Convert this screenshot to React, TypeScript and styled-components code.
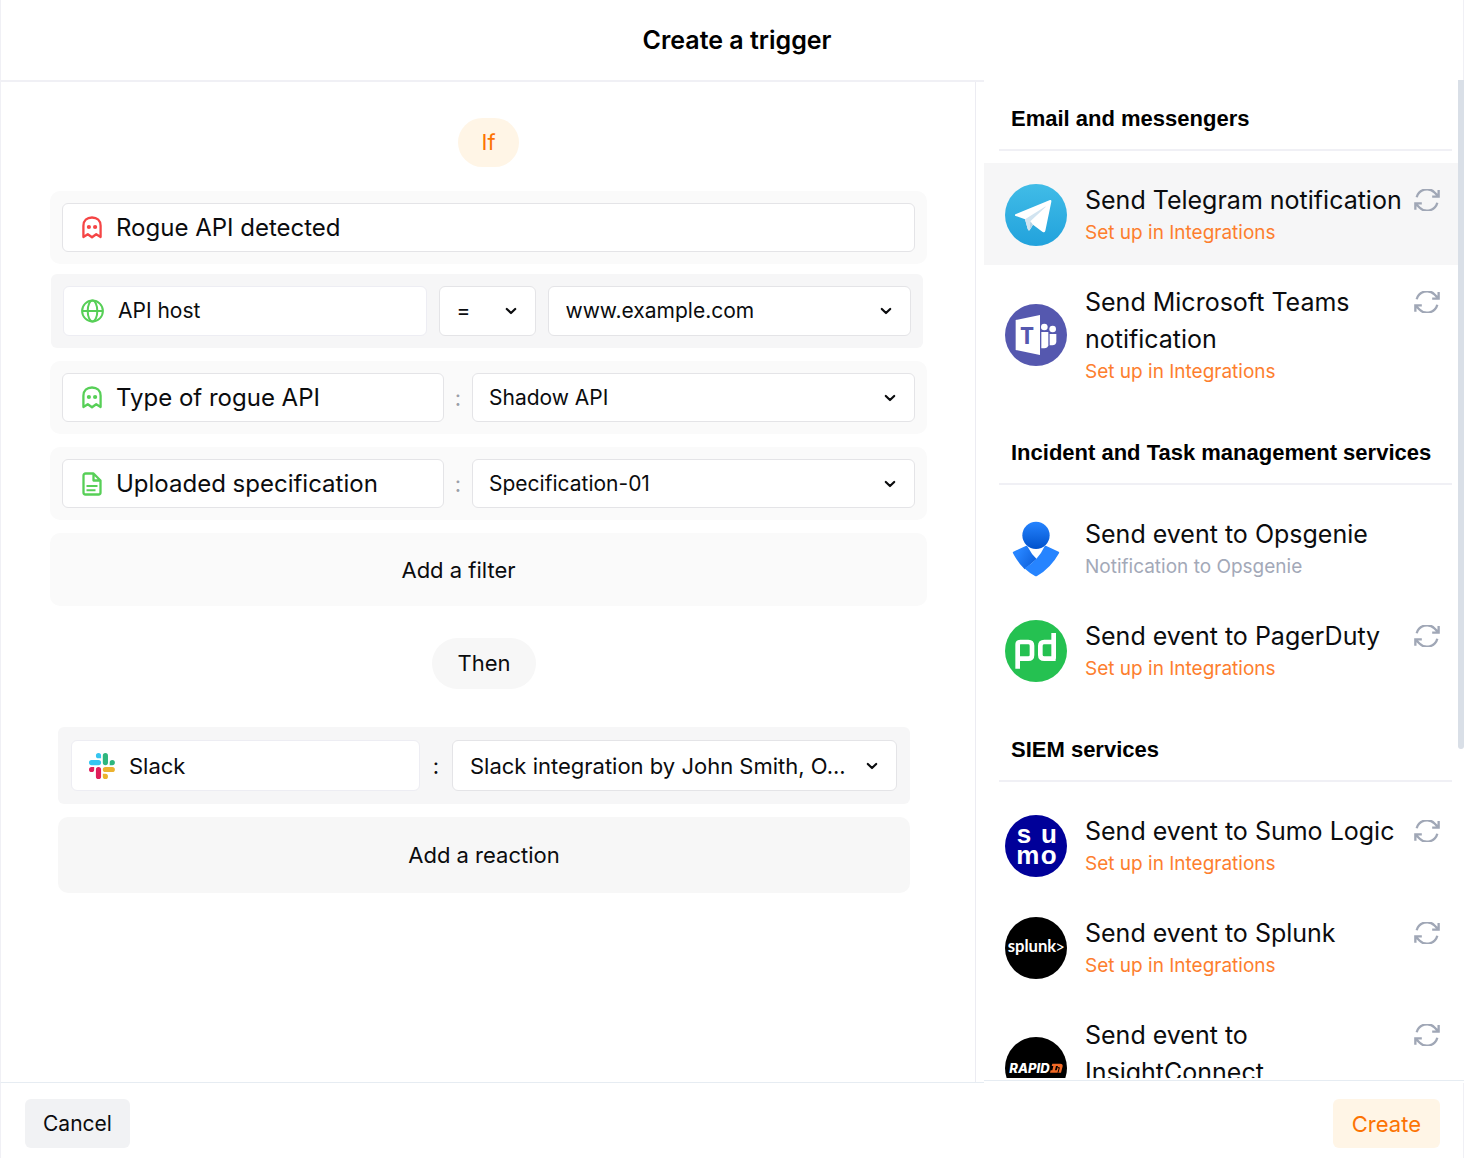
import React from "react";
import styled, { createGlobalStyle } from "styled-components";

const GlobalStyle = createGlobalStyle`
  *, *::before, *::after { box-sizing: border-box; }
  body {
    margin: 0;
    background: #fff;
    color: #0b0c0e;
    font-family: Inter, "Liberation Sans", sans-serif;
    font-size: 22px;
    line-height: 28px;
  }
  button, input, select { font: inherit; color: inherit; margin: 0; }
`;

const line = "#f0f0f5";

const Dialog = styled.div`
  display: flex;
  flex-direction: column;
  height: 100vh;
  margin-right: 6px;
`;

const Header = styled.header`
  display: flex;
  align-items: center;
  justify-content: center;
  height: 80px;
  padding-left: 10px;
  border: solid ${line};
  border-width: 0 1px;
`;

const Title = styled.h1`
  margin: 0;
  font-size: 25px;
  line-height: 32px;
  font-weight: 600;
  color: #000;
`;

const Body = styled.div`
  display: flex;
  flex: 1;
  min-height: 0;
`;

const Main = styled.main`
  display: flex;
  flex: 1;
  min-width: 0;
  padding-right: 8px;
  border-top: 2px solid ${line};
  border-bottom: 1px solid #e6ecf2;
  border-left: 1px solid ${line};
`;

const Canvas = styled.div`
  flex: 1;
  min-width: 0;
  padding-top: 36px;
  border-right: 1px solid #ececf2;
`;

const Block = styled.section<{ $then?: boolean }>`
  display: flex;
  flex-direction: column;
  align-items: center;
  margin: ${(p) => (p.$then ? "32px 65px 0 57px" : "0 48px 0 49px")};
`;

const Pill = styled.div<{ $accent?: boolean }>`
  padding: ${(p) => (p.$accent ? "10px 23px 11px" : "11px 25px 12px")};
  margin-bottom: ${(p) => (p.$accent ? "24px" : "38px")};
  border-radius: 26px;
  background: ${(p) => (p.$accent ? "#fff5e6" : "#f7f7f7")};
  color: ${(p) => (p.$accent ? "#fc7303" : "inherit")};
`;

const Rows = styled.div`
  display: flex;
  flex-direction: column;
  gap: 13px;
  width: 100%;
`;

const rowColumns = {
  single: "minmax(0, 1fr)",
  host: "minmax(0, 1fr) 97px minmax(0, 1fr)",
  pair: "minmax(0, 382fr) 28px minmax(0, 443fr)",
  reaction: "minmax(0, 349fr) 32px minmax(0, 445fr)",
};

const Row = styled.div<{ $kind: keyof typeof rowColumns }>`
  display: grid;
  grid-template-columns: ${(p) => rowColumns[p.$kind]};
  column-gap: ${(p) => (p.$kind === "host" ? "12px" : "0")};
  align-items: center;
  padding: ${(p) => (p.$kind === "reaction" ? "13px" : "12px")};
  margin: ${(p) => (p.$kind === "host" ? "0 4px 0 1px" : "0")};
  border-radius: ${(p) => (p.$kind === "host" || p.$kind === "reaction" ? "6px" : "10px")};
  background: ${(p) => (p.$kind === "host" || p.$kind === "reaction" ? "#f6f6f7" : "#fafafa")};
`;

const EventRow = styled(Row)`
  width: 100%;
  margin-bottom: 10px;
`;

const Separator = styled.span<{ $dark?: boolean }>`
  text-align: center;
  color: ${(p) => (p.$dark ? "inherit" : "#9a9fa8")};
`;

const Box = styled.label<{ $soft?: boolean; $height: number; $inset: number }>`
  display: flex;
  align-items: center;
  height: ${(p) => p.$height}px;
  padding: 0 18px 0 ${(p) => p.$inset}px;
  border: 1px solid ${(p) => (p.$soft ? "#ededf3" : "#e4e4e7")};
  border-radius: 6px;
  background: #fff;
`;

const TextBox = styled.input<{ $size: number }>`
  flex: 1;
  min-width: 0;
  padding: 0;
  margin-left: 14px;
  border: 0;
  outline: 0;
  background: none;
  font-size: ${(p) => p.$size}px;
`;

const DropDown = styled.select<{ $size: number }>`
  flex: 1;
  min-width: 0;
  padding: 0;
  border: 0;
  outline: 0;
  background: none;
  appearance: none;
  text-overflow: ellipsis;
  font-size: ${(p) => p.$size}px;
`;

const AddButton = styled.button<{ $reaction?: boolean }>`
  width: 100%;
  height: ${(p) => (p.$reaction ? "76px" : "73px")};
  padding: ${(p) => (p.$reaction ? "0" : "0 60px 0 0")};
  border: 0;
  border-radius: 10px;
  background: ${(p) => (p.$reaction ? "#f7f7f7" : "#fafafa")};
`;

const Aside = styled.aside`
  display: flex;
  flex: none;
  width: 480px;
  margin-bottom: 2px;
  padding-bottom: 2px;
  border-bottom: 1px solid #e6ecf2;
`;

const Services = styled.div`
  display: flex;
  flex: 1;
  flex-direction: column;
  gap: 10px;
  min-width: 0;
  overflow: hidden;
`;

const ScrollTrack = styled.div`
  width: 6px;
`;

const ScrollThumb = styled.div`
  height: 67%;
  border-radius: 0 0 3px 3px;
  background: #d9dfe7;
`;

const GroupTitle = styled.h2`
  margin: 0 6px 12px 15px;
  padding: 25px 0 16px 12px;
  border-bottom: 2px solid ${line};
  font-family: "Liberation Sans", Arial, sans-serif;
  font-size: 22px;
  line-height: 28px;
  font-weight: 700;
  color: #000;
`;

const List = styled.ul`
  margin: 0;
  padding: 0;
  list-style: none;
`;

const Item = styled.li<{ $active?: boolean }>`
  display: flex;
  align-items: center;
  padding: 19px 18px 18px 21px;
  background: ${(p) => (p.$active ? "#f6f6f7" : "transparent")};
`;

const Details = styled.div`
  flex: 1;
  min-width: 0;
  margin: 0 6px 0 18px;
`;

const ItemTitle = styled.div`
  font-size: 25px;
  line-height: 37px;
`;

const SetupLink = styled.a`
  display: block;
  font-size: 19px;
  line-height: 28px;
  color: #fd7e2e;
  text-decoration: none;
`;

const Note = styled.div`
  font-size: 19px;
  line-height: 28px;
  color: #a3a9b8;
`;

const RefreshButton = styled.button`
  display: flex;
  align-self: flex-start;
  align-items: center;
  height: 35px;
  padding: 0;
  border: 0;
  background: none;
  color: #a0a7b6;
`;

const Footer = styled.footer`
  display: flex;
  justify-content: space-between;
  align-items: flex-start;
  height: 75px;
  padding: 16px 23px 0 24px;
  border: solid ${line};
  border-width: 0 1px;
`;

const ActionButton = styled.button<{ $primary?: boolean }>`
  height: 49px;
  padding: 0 ${(p) => (p.$primary ? 19 : 18)}px;
  border: 0;
  border-radius: 6px;
  background: ${(p) => (p.$primary ? "#fff5e6" : "#f1f2f4")};
  color: ${(p) => (p.$primary ? "#fc7303" : "inherit")};
  font-size: ${(p) => (p.$primary ? 22 : 21)}px;
`;

const Chevron = () => (
  <svg width="12" height="8" viewBox="0 0 12 8" fill="none" stroke="#0b0c0e" strokeWidth="2.2" strokeLinecap="round" strokeLinejoin="round" aria-hidden="true">
    <path d="M1.8 2 6 6l4.2-4" />
  </svg>
);

const Ghost = ({ color }: { color: string }) => (
  <svg width="20" height="23" viewBox="0 0 20 23" fill="none" stroke={color} strokeWidth="2.3" aria-hidden="true">
    <path
      strokeLinejoin="round"
      d="M1.4 21V9.800C1.400 4.600 5 1.500 10 1.500s8.600 3.100 8.600 8.300V21l-4.400-2.800L10 21.300l-4.200-3.100z"
    />
    <circle cx="6.900" cy="11" r="2.100" fill={color} stroke="none" />
    <circle cx="13.100" cy="11" r="2.100" fill={color} stroke="none" />
  </svg>
);

const Globe = () => (
  <svg width="23" height="24" viewBox="0 0 23 24" fill="none" stroke="#57cf57" strokeWidth="2" aria-hidden="true">
    <circle cx="11.500" cy="12" r="10.400" />
    <ellipse cx="11.500" cy="12" rx="4.800" ry="10.400" />
    <path d="M1 12h21" />
  </svg>
);

const Document = () => (
  <svg width="20" height="24" viewBox="0 0 20 24" fill="none" stroke="#57cf57" strokeWidth="2.300" strokeLinejoin="round" aria-hidden="true">
    <path d="M11.500 1.500h-8a2 2 0 0 0-2 2v17a2 2 0 0 0 2 2h13a2 2 0 0 0 2-2V8.500zV8.500h7" />
    <path d="M4.500 14h11M4.500 18.200h9" strokeWidth="1.900" />
  </svg>
);

const Refresh = () => (
  <svg width="26" height="22" viewBox="2 3.500 20 17" fill="none" stroke="currentColor" strokeWidth="1.800" aria-hidden="true">
    <path d="M16 9.400h5M3 19.600v-5h5M3 14.600l3.165 3.235a8.250 8.250 0 0 0 13.803-3.700M4.031 9.865a8.250 8.250 0 0 1 13.803-3.700L21 9.400M21 4.356v5.900" />
  </svg>
);

const SlackMark = () => (
  <svg width="26" height="26" viewBox="0 0 54 54" aria-hidden="true">
    <path fill="#36C5F0" d="M19.712.133a5.381 5.381 0 0 0-5.376 5.387 5.381 5.381 0 0 0 5.376 5.386h5.376V5.520A5.381 5.381 0 0 0 19.712.133m0 14.365H5.376A5.381 5.381 0 0 0 0 19.884a5.381 5.381 0 0 0 5.376 5.387h14.336a5.381 5.381 0 0 0 5.376-5.387 5.381 5.381 0 0 0-5.376-5.386" />
    <path fill="#2EB67D" d="M53.760 19.884a5.381 5.381 0 0 0-5.376-5.386 5.381 5.381 0 0 0-5.376 5.386v5.387h5.376a5.381 5.381 0 0 0 5.376-5.387m-14.336 0V5.520A5.381 5.381 0 0 0 34.048.133a5.381 5.381 0 0 0-5.376 5.387v14.364a5.381 5.381 0 0 0 5.376 5.387 5.381 5.381 0 0 0 5.376-5.387" />
    <path fill="#ECB22E" d="M34.048 54a5.381 5.381 0 0 0 5.376-5.387 5.381 5.381 0 0 0-5.376-5.386h-5.376v5.386A5.381 5.381 0 0 0 34.048 54m0-14.365h14.336a5.381 5.381 0 0 0 5.376-5.386 5.381 5.381 0 0 0-5.376-5.387H34.048a5.381 5.381 0 0 0-5.376 5.387 5.381 5.381 0 0 0 5.376 5.386" />
    <path fill="#E01E5A" d="M0 34.249a5.381 5.381 0 0 0 5.376 5.386 5.381 5.381 0 0 0 5.376-5.386v-5.387H5.376A5.381 5.381 0 0 0 0 34.249m14.336 0v14.364A5.381 5.381 0 0 0 19.712 54a5.381 5.381 0 0 0 5.376-5.387V34.249a5.381 5.381 0 0 0-5.376-5.387 5.381 5.381 0 0 0-5.376 5.387" />
  </svg>
);

const LogoSvg = styled.svg`
  flex: none;
  width: 62px;
  height: 62px;
`;

const Logo = ({ children }: { children: React.ReactNode }) => (
  <LogoSvg viewBox="0 0 186 186" aria-hidden="true">
    {children}
  </LogoSvg>
);

const Telegram = () => (
  <Logo>
    <defs>
      <linearGradient id="telegram" x1="0" y1="0" x2="0" y2="1">
        <stop offset="0" stopColor="#41bce7" />
        <stop offset="1" stopColor="#22a2dc" />
      </linearGradient>
    </defs>
    <circle cx="93" cy="93" r="93" fill="url(#telegram)" />
    <path fill="#fff" d="M31 91 135 48q5-1 4 5l-18 87q-2 8-9 3L84 122l-10 17q-5 2-6-5l-8-28-28-10q-4-2-1-5z" />
    <path fill="#d2e4f0" d="m60 106 60-38q4-2 1 2l-45 42-3 27q-4 1-5-5z" />
    <path fill="#b5d2e4" d="m76 112 8 10-11 17z" />
  </Logo>
);

const Teams = () => (
  <Logo>
    <circle cx="93" cy="93" r="93" fill="#5558af" />
    <path fill="#fff" d="m32 48 73-15v120l-73-15z" />
    <text x="66" y="119" textAnchor="middle" fill="#5558af" fontFamily="Open Sans, sans-serif" fontWeight="700" fontSize="70">T</text>
    <g fill="#fff">
      <circle cx="118" cy="69" r="10" />
      <circle cx="143" cy="75" r="10" />
      <path d="M109 84h21v40q-2 9-12 9h-9z" />
      <path d="M134 90h20v24q-2 10-12 10h-8z" />
    </g>
  </Logo>
);

const Opsgenie = () => (
  <Logo>
    <defs>
      <linearGradient id="opsHead" x1="0" y1="0" x2="0" y2="1">
        <stop offset="0" stopColor="#2684ff" />
        <stop offset="1" stopColor="#0052cc" />
      </linearGradient>
      <linearGradient id="opsWing" x1="0" y1="0" x2="1" y2="0.600">
        <stop offset="0.300" stopColor="#2684ff" />
        <stop offset="1" stopColor="#0f62dc" />
      </linearGradient>
    </defs>
    <circle cx="93" cy="52" r="41" fill="url(#opsHead)" />
    <path fill="url(#opsWing)" d="M25 101q-3 2-1 5 14 27 35 48l36-31q-16-15-27-37-2-4-6-2z" />
    <path fill="#2684ff" d="M161 101q3 2 1 5-25 45-66 68-3 2-6 0-17-9-32-23 43-26 60-65 2-4 6-2z" />
  </Logo>
);

const PagerDuty = () => (
  <Logo>
    <circle cx="93" cy="93" r="93" fill="#25c151" />
    <g fill="none" stroke="#fff" strokeWidth="14">
      <path d="M38 146V74q0-8 8-8h24q11 0 11 11v28q0 11-11 11H44" />
      <path d="M146 39v77M146 66h-28q-12 0-12 11v28q0 11 12 11h34" />
    </g>
  </Logo>
);

const SumoLogic = () => (
  <Logo>
    <circle cx="93" cy="93" r="93" fill="#000099" />
    <g fill="#fff" fontFamily="Liberation Sans, Arial, sans-serif" fontWeight="700" fontSize="78">
      <text x="35" y="83">s</text>
      <text x="108" y="83">u</text>
      <text x="34" y="146">m</text>
      <text x="107" y="146">o</text>
    </g>
  </Logo>
);

const Splunk = () => (
  <Logo>
    <circle cx="93" cy="93" r="93" fill="#000" />
    <g fill="#fff" fontFamily="Lato, sans-serif">
      <text x="8" y="105" fontWeight="700" fontSize="50">splunk</text>
      <text x="151" y="107" fontSize="50">&gt;</text>
    </g>
  </Logo>
);

const Rapid7 = () => (
  <Logo>
    <circle cx="93" cy="93" r="93" fill="#000" />
    <text x="13" y="107" fill="#fff" fontFamily="Inter, sans-serif" fontStyle="italic" fontWeight="800" fontSize="39">RAPID</text>
    <path fill="#f26a26" d="M142 80h24q8 0 7 8l-5 19h-22l2-7h7l4-13h-6l-3 12-4 8h-11l2-7h5l3-13h-5z" />
    <path fill="none" stroke="#000" strokeWidth="3" d="M158 92h5l-4 15" />
  </Logo>
);

type FieldProps = { icon: React.ReactNode; name: string; value: string; size?: number; inset?: number; soft?: boolean; height?: number };

const Field = ({ icon, name, value, size = 24, inset = 19, soft, height = 49 }: FieldProps) => (
  <Box $soft={soft} $height={height} $inset={inset}>
    {icon}
    <TextBox $size={size} aria-label={name} defaultValue={value} />
  </Box>
);

type ChoiceProps = { name: string; value: string; size?: number; inset?: number; height?: number };

const Choice = ({ name, value, size = 21, inset = 16, height = 49 }: ChoiceProps) => (
  <Box $height={height} $inset={inset}>
    <DropDown $size={size} aria-label={name} defaultValue={value}>
      <option>{value}</option>
    </DropDown>
    <Chevron />
  </Box>
);

const groups = [
  {
    title: "Email and messengers",
    items: [
      { logo: <Telegram />, title: "Send Telegram notification", active: true },
      { logo: <Teams />, title: "Send Microsoft Teams notification" },
    ],
  },
  {
    title: "Incident and Task management services",
    items: [
      { logo: <Opsgenie />, title: "Send event to Opsgenie", note: "Notification to Opsgenie" },
      { logo: <PagerDuty />, title: "Send event to PagerDuty" },
    ],
  },
  {
    title: "SIEM services",
    items: [
      { logo: <SumoLogic />, title: "Send event to Sumo Logic" },
      { logo: <Splunk />, title: "Send event to Splunk" },
      { logo: <Rapid7 />, title: "Send event to InsightConnect" },
    ],
  },
] as { title: string; items: { logo: React.ReactNode; title: string; active?: boolean; note?: string }[] }[];

export default function App() {
  return (
    <Dialog role="dialog" aria-labelledby="dialog-title">
      <GlobalStyle />
      <Header>
        <Title id="dialog-title">Create a trigger</Title>
      </Header>
      <Body>
        <Main>
          <Canvas>
            <Block>
              <Pill $accent>If</Pill>
              <EventRow $kind="single">
                <Field icon={<Ghost color="#f54545" />} name="Event" value="Rogue API detected" />
              </EventRow>
              <Rows>
                <Row $kind="host">
                  <Field icon={<Globe />} name="Host filter" value="API host" size={21} inset={17} soft height={50} />
                  <Choice name="Comparison" value="=" inset={17} height={50} />
                  <Choice name="Host" value="www.example.com" inset={17} height={50} />
                </Row>
                <Row $kind="pair">
                  <Field icon={<Ghost color="#57cf57" />} name="Type filter" value="Type of rogue API" />
                  <Separator>:</Separator>
                  <Choice name="Type" value="Shadow API" />
                </Row>
                <Row $kind="pair">
                  <Field icon={<Document />} name="Specification filter" value="Uploaded specification" />
                  <Separator>:</Separator>
                  <Choice name="Specification" value="Specification-01" />
                </Row>
                <AddButton>Add a filter</AddButton>
              </Rows>
            </Block>
            <Block $then>
              <Pill>Then</Pill>
              <Rows>
                <Row $kind="reaction">
                  <Field icon={<SlackMark />} name="Reaction" value="Slack" size={22} inset={17} soft height={51} />
                  <Separator $dark>:</Separator>
                  <Choice name="Slack integration" value="Slack integration by John Smith, O..." size={22} inset={17} height={51} />
                </Row>
                <AddButton $reaction>Add a reaction</AddButton>
              </Rows>
            </Block>
          </Canvas>
        </Main>
        <Aside>
          <Services>
            {groups.map((group) => (
              <section key={group.title}>
                <GroupTitle>{group.title}</GroupTitle>
                <List>
                  {group.items.map((item) => (
                    <Item key={item.title} $active={item.active}>
                      {item.logo}
                      <Details>
                        <ItemTitle>{item.title}</ItemTitle>
                        {item.note ? <Note>{item.note}</Note> : <SetupLink href="#integrations">Set up in Integrations</SetupLink>}
                      </Details>
                      {!item.note && (
                        <RefreshButton aria-label={`Refresh: ${item.title}`}>
                          <Refresh />
                        </RefreshButton>
                      )}
                    </Item>
                  ))}
                </List>
              </section>
            ))}
          </Services>
          <ScrollTrack>
            <ScrollThumb />
          </ScrollTrack>
        </Aside>
      </Body>
      <Footer>
        <ActionButton>Cancel</ActionButton>
        <ActionButton $primary>Create</ActionButton>
      </Footer>
    </Dialog>
  );
}
